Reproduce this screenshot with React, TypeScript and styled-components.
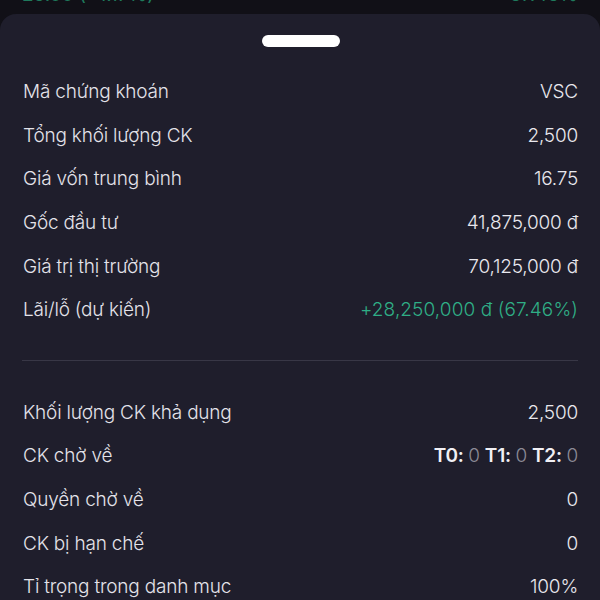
import React from 'react';
import styled, { createGlobalStyle } from 'styled-components';

type RowProps = {
  label: string,
  value: React.ReactNode,
  tone?: 'default' | 'up'
};

const GlobalStyle = createGlobalStyle`
  html, body {
    margin: 0;
    padding: 0;
    background: #111017;
  }
  body {
    font-family: Inter, "Noto Sans", sans-serif;
    -webkit-font-smoothing: antialiased;
  }
`;

const Page = styled.div`
  width: 600px;
  height: 600px;
  overflow: hidden;
  display: flex;
  flex-direction: column;
  background: #111017;
`;

// the list behind the sheet, only its last line peeks out
const Behind = styled.div`
  height: 14px;
  flex: none;
  overflow: hidden;
  display: flex;
  justify-content: space-between;
  padding: 0 22px;
  color: #1f7a5c;
  font-size: 19px;
  line-height: 14px;
`;

const BehindText = styled.span`
  margin-top: -12px;
`;

const Sheet = styled.div`
  flex: 1;
  background: #1f1e2c;
  border-radius: 16px 16px 0 0;
  padding: 21px 22px 0 23px;
  display: flex;
  flex-direction: column;
`;

const Handle = styled.div`
  align-self: center;
  width: 78px;
  height: 12px;
  border-radius: 6px;
  background: #ffffff;
  margin-bottom: 23px;
`;

const Group = styled.div`
  display: flex;
  flex-direction: column;
`;

const Row = styled.div`
  display: flex;
  justify-content: space-between;
  align-items: center;
  height: 43.6px;
  font-size: 19px;
  font-weight: 350;
  color: #e4e3ea;
`;

const Label = styled.span`
  letter-spacing: -0.2px;
`;

const Value = styled.span<{ $tone: 'default' | 'up' }>`
  color: ${p => (p.$tone === 'up' ? '#2fae86' : '#e9e8ee')};
  letter-spacing: ${p => (p.$tone === 'up' ? '0.1px' : '-0.2px')};
`;

const Divider = styled.div`
  height: 1px;
  background: #383746;
  margin: 28px 0 30px -1px;
`;

const Pending = styled.span`
  display: flex;
  gap: 5px;
`;

const Slot = styled.span`
  font-weight: 600;
  color: #f1f0f5;
`;

const Zero = styled.span`
  font-weight: 350;
  color: #8b8a96;
`;

const InfoRow: React.FC<RowProps> = ({ label, value, tone = 'default' }) => (
  <Row>
    <Label>{label}</Label>
    <Value $tone={tone}>{value}</Value>
  </Row>
);

const pendingSlots = ['T0', 'T1', 'T2'];

const App: React.FC = () => {
  return (
    <Page>
      <GlobalStyle />
      <Behind>
        <BehindText>25.00 (+1.17%)</BehindText>
        <BehindText>67.46%</BehindText>
      </Behind>
      <Sheet>
        <Handle />
        <Group>
          <InfoRow label="Mã chứng khoán" value="VSC" />
          <InfoRow label="Tổng khối lượng CK" value="2,500" />
          <InfoRow label="Giá vốn trung bình" value="16.75" />
          <InfoRow label="Gốc đầu tư" value="41,875,000 đ" />
          <InfoRow label="Giá trị thị trường" value="70,125,000 đ" />
          <InfoRow label="Lãi/lỗ (dự kiến)" value="+28,250,000 đ (67.46%)" tone="up" />
        </Group>
        <Divider />
        <Group>
          <InfoRow label="Khối lượng CK khả dụng" value="2,500" />
          <InfoRow
            label="CK chờ về"
            value={
              <Pending>
                {pendingSlots.map(s => (
                  <Slot key={s}>
                    {s}: <Zero>0</Zero>
                  </Slot>
                ))}
              </Pending>
            }
          />
          <InfoRow label="Quyền chờ về" value="0" />
          <InfoRow label="CK bị hạn chế" value="0" />
          <InfoRow label="Tỉ trọng trong danh mục" value="100%" />
        </Group>
      </Sheet>
    </Page>
  );
};

export default App;
